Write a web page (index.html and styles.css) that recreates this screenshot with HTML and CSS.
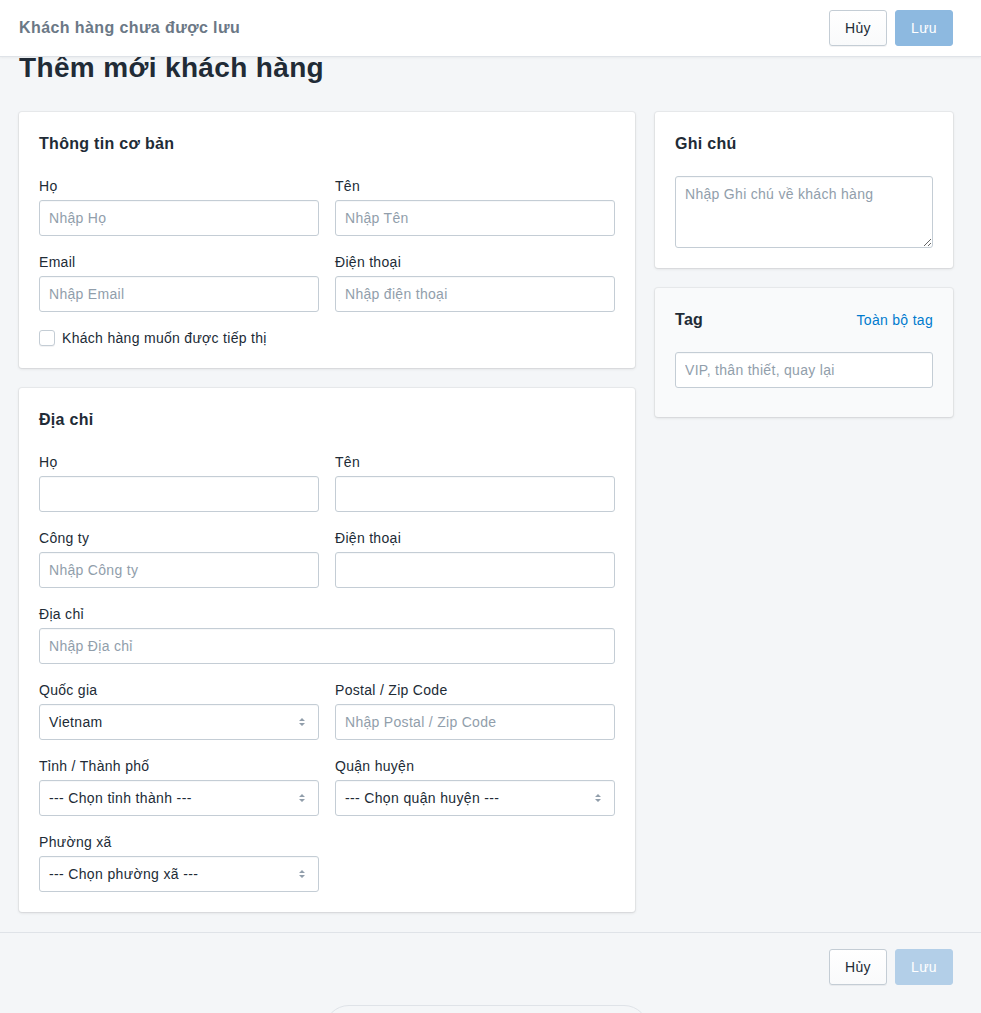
FILE: index.html
```html
<!DOCTYPE html>
<html lang="vi">
<head>
<meta charset="utf-8">
<title>Thêm mới khách hàng</title>
<link rel="stylesheet" href="styles.css">
</head>
<body>
<header class="topbar">
  <div class="topbar-title">Khách hàng chưa được lưu</div>
  <div class="actions">
    <button class="btn">Hủy</button>
    <button class="btn btn-primary" disabled>Lưu</button>
  </div>
</header>

<main class="page">
  <h1 class="page-title">Thêm mới khách hàng</h1>

  <div class="layout">
    <div class="col">
      <section class="card">
        <h2 class="card-title">Thông tin cơ bản</h2>
        <div class="grid2">
          <div class="field">
            <label class="label">Họ</label>
            <input class="input" placeholder="Nhập Họ">
          </div>
          <div class="field">
            <label class="label">Tên</label>
            <input class="input" placeholder="Nhập Tên">
          </div>
          <div class="field">
            <label class="label">Email</label>
            <input class="input" placeholder="Nhập Email">
          </div>
          <div class="field">
            <label class="label">Điện thoại</label>
            <input class="input" placeholder="Nhập điện thoại">
          </div>
          <label class="check full">
            <span class="checkbox"></span>
            <span>Khách hàng muốn được tiếp thị</span>
          </label>
        </div>
      </section>

      <section class="card">
        <h2 class="card-title">Địa chỉ</h2>
        <div class="grid2">
          <div class="field">
            <label class="label">Họ</label>
            <input class="input">
          </div>
          <div class="field">
            <label class="label">Tên</label>
            <input class="input">
          </div>
          <div class="field">
            <label class="label">Công ty</label>
            <input class="input" placeholder="Nhập Công ty">
          </div>
          <div class="field">
            <label class="label">Điện thoại</label>
            <input class="input">
          </div>
          <div class="field full">
            <label class="label">Địa chỉ</label>
            <input class="input" placeholder="Nhập Địa chỉ">
          </div>
          <div class="field">
            <label class="label">Quốc gia</label>
            <div class="select">
              <span>Vietnam</span>
              <svg class="arrows" width="8" height="10" viewBox="0 0 8 10"><path d="M4 1 L7 4 H1 Z M4 9 L7 6 H1 Z" fill="#919eab"/></svg>
            </div>
          </div>
          <div class="field">
            <label class="label">Postal / Zip Code</label>
            <input class="input" placeholder="Nhập Postal / Zip Code">
          </div>
          <div class="field">
            <label class="label">Tỉnh / Thành phố</label>
            <div class="select">
              <span>--- Chọn tỉnh thành ---</span>
              <svg class="arrows" width="8" height="10" viewBox="0 0 8 10"><path d="M4 1 L7 4 H1 Z M4 9 L7 6 H1 Z" fill="#919eab"/></svg>
            </div>
          </div>
          <div class="field">
            <label class="label">Quận huyện</label>
            <div class="select">
              <span>--- Chọn quận huyện ---</span>
              <svg class="arrows" width="8" height="10" viewBox="0 0 8 10"><path d="M4 1 L7 4 H1 Z M4 9 L7 6 H1 Z" fill="#919eab"/></svg>
            </div>
          </div>
          <div class="field">
            <label class="label">Phường xã</label>
            <div class="select">
              <span>--- Chọn phường xã ---</span>
              <svg class="arrows" width="8" height="10" viewBox="0 0 8 10"><path d="M4 1 L7 4 H1 Z M4 9 L7 6 H1 Z" fill="#919eab"/></svg>
            </div>
          </div>
        </div>
      </section>
    </div>

    <div class="col">
      <section class="card">
        <h2 class="card-title">Ghi chú</h2>
        <textarea class="textarea" placeholder="Nhập Ghi chú về khách hàng"></textarea>
      </section>
      <section class="card card-subdued card-tag">
        <div class="card-head">
          <h2 class="card-title">Tag</h2>
          <a class="link" href="#">Toàn bộ tag</a>
        </div>
        <input class="input" placeholder="VIP, thân thiết, quay lại">
      </section>
    </div>
  </div>

  <footer class="footer">
    <div class="actions">
      <button class="btn">Hủy</button>
      <button class="btn btn-primary btn-light" disabled>Lưu</button>
    </div>
  </footer>
  <div class="pill-wrap"><div class="pill"></div></div>
</main>
</body>
</html>
```

FILE: styles.css
```css
* { box-sizing: border-box; }

html, body {
  margin: 0;
  background: #f4f6f8;
  color: #212b36;
  font-family: "Liberation Sans", Arial, sans-serif;
  font-size: 14px;
  line-height: 20px;
  letter-spacing: 0.3px;
  overflow: hidden;
}

.topbar {
  position: sticky;
  top: 0;
  z-index: 2;
  height: 56px;
  background: #fff;
  box-shadow: 0 1px 0 #dfe3e8, 0 1px 3px rgba(63, 63, 68, 0.12);
  display: flex;
  align-items: center;
  justify-content: space-between;
  padding: 0 28px 0 19px;
}

.topbar-title {
  font-size: 16px;
  font-weight: bold;
  color: #6b7886;
  letter-spacing: 0.4px;
}

.actions {
  display: flex;
  gap: 8px;
}

.btn {
  height: 36px;
  min-width: 58px;
  padding: 0 14px;
  border: 1px solid #c4cdd5;
  border-radius: 3px;
  background: linear-gradient(#fff, #f9fafb);
  box-shadow: 0 1px 0 rgba(22, 29, 37, 0.05);
  color: #212b36;
  font-family: inherit;
  font-size: 14px;
  letter-spacing: 0.3px;
}

.btn-primary {
  background: #8db9e0;
  border-color: #8db9e0;
  color: #fff;
  box-shadow: none;
}

.btn-light {
  background: #b3cfe8;
  border-color: #b3cfe8;
}

.page {
  padding: 0 28px 0 19px;
}

.page-title {
  margin: -2px 0 30px;
  font-size: 28px;
  line-height: 28px;
  font-weight: bold;
  letter-spacing: 0.35px;
  color: #212b36;
}

.layout {
  display: grid;
  grid-template-columns: 1fr 298px;
  gap: 20px;
  align-items: start;
}

.col {
  display: flex;
  flex-direction: column;
  gap: 20px;
}

.card {
  background: #fff;
  border-radius: 3px;
  box-shadow: 0 0 0 1px rgba(63, 63, 68, 0.05), 0 1px 3px 0 rgba(63, 63, 68, 0.15);
  padding: 20px;
}

.card-subdued {
  background: #f9fafb;
}

.card-tag {
  padding-bottom: 29px;
}

.card-title {
  margin: 0 0 20px;
  font-size: 16px;
  line-height: 24px;
  font-weight: bold;
}

.card-head {
  display: flex;
  justify-content: space-between;
  align-items: center;
  margin-bottom: 20px;
}

.card-head .card-title {
  margin: 0;
}

.link {
  color: #007ace;
  text-decoration: none;
  line-height: 24px;
}

.grid2 {
  display: grid;
  grid-template-columns: 1fr 1fr;
  column-gap: 16px;
  row-gap: 16px;
}

.full {
  grid-column: 1 / -1;
}

.field {
  display: flex;
  flex-direction: column;
  gap: 4px;
}

.label {
  display: block;
  line-height: 20px;
}

.input, .select, .textarea {
  width: 100%;
  height: 36px;
  border: 1px solid #c4cdd5;
  border-radius: 3px;
  background: #fff;
  padding: 0 9px;
  font-family: inherit;
  font-size: 14px;
  letter-spacing: 0.3px;
  color: #212b36;
  box-shadow: inset 0 1px 0 0 rgba(99, 115, 129, 0.05);
}

.input::placeholder, .textarea::placeholder {
  color: #919eab;
}

.textarea {
  display: block;
  height: 72px;
  padding: 7px 9px;
  line-height: 20px;
  resize: vertical;
}

.select {
  display: flex;
  align-items: center;
  justify-content: space-between;
  letter-spacing: 0.35px;
  padding-right: 12px;
}

.arrows {
  display: block;
}

.check {
  display: flex;
  align-items: center;
  gap: 7px;
  line-height: 20px;
}

.checkbox {
  width: 16px;
  height: 16px;
  border: 1px solid #c4cdd5;
  border-radius: 3px;
  background: #fff;
  box-shadow: 0 1px 0 rgba(22, 29, 37, 0.05);
}

.footer {
  margin: 20px -28px 0 -19px;
  border-top: 1px solid #dfe3e8;
  padding: 16px 28px 0 19px;
  display: flex;
  justify-content: flex-end;
}

.pill-wrap {
  display: flex;
  justify-content: center;
  padding-top: 20px;
}

.pill {
  width: 325px;
  height: 50px;
  border: 1px solid #dfe3e8;
  border-radius: 25px;
}
```
